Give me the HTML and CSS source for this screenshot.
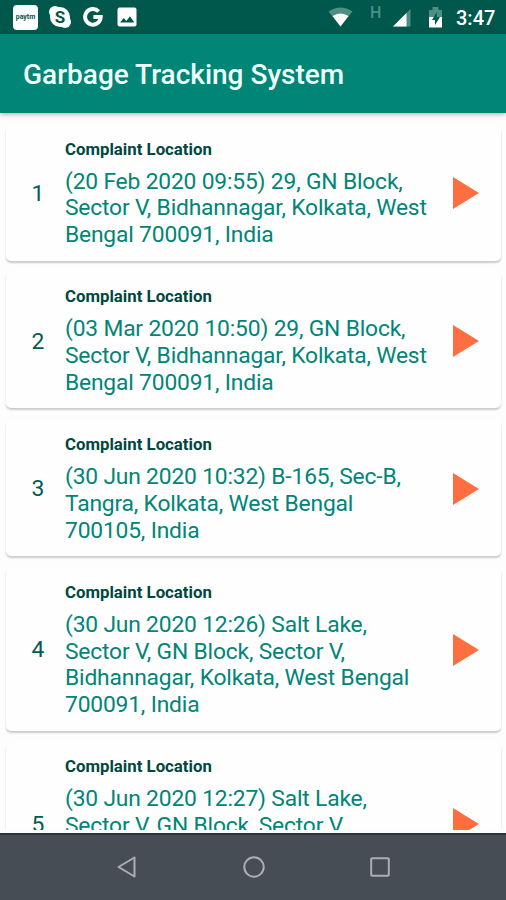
FILE: index.html
```html
<!DOCTYPE html>
<html lang="en">
<head>
<meta charset="utf-8">
<title>Garbage Tracking System</title>
<link rel="stylesheet" href="styles.css">
</head>
<body>
<div class="screen">
  <div class="status">
    <span class="paytm">paytm</span>
    <svg class="skype" width="24" height="24" viewBox="0 0 24 24"><circle cx="12" cy="12" r="10" fill="#fff"/><circle cx="7" cy="7" r="6" fill="#fff"/><circle cx="17" cy="17" r="6" fill="#fff"/><text x="12" y="18" text-anchor="middle" class="skype-letter">S</text></svg>
    <svg class="google" width="20" height="20" viewBox="0 0 20 20"><path d="M15.6 4.5A7.8 7.8 0 1 0 17.7 10H10.4" fill="none" stroke="#fff" stroke-width="4"/></svg>
    <svg class="photo" width="20" height="20" viewBox="0 0 20 20"><rect x=".5" y=".5" width="19" height="19" rx="2" fill="#fff"/><path d="M3 15.5L6.700 11l2.600 3L13 9.200l4.400 6.300z" fill="#00574b"/></svg>
    <svg class="wifi" width="25" height="20" viewBox="0 0 25 20"><path d="M.5 4.500Q12.500-3.500 24.500 4.500L12.500 19.500z" fill="#4d8f83"/><path d="M4.500 9Q12.500 4 20.500 9L12.500 19.500z" fill="#fff"/></svg>
    <span class="network">H</span>
    <svg class="signal" width="18" height="18" viewBox="0 0 18 18"><path d="M0 17.500L17.500 0V17.500z" fill="#4d8f83"/><path d="M0 17.500L13.500 4V17.500z" fill="#fff"/></svg>
    <svg class="battery" width="13" height="21" viewBox="0 0 13 21"><path d="M0 3h3.500V0h6v3H13v7H0z" fill="#4d8f83"/><path d="M0 10h13v10.500H0z" fill="#fff"/><path d="M7.800 5L3 13h3v5l5-8H7.800z" fill="#00574b"/></svg>
    <span class="clock">3:47</span>
  </div>
  <header class="appbar">Garbage Tracking System</header>
  <main class="list">
    <article class="card">
      <span class="num">1</span>
      <div class="info"><h2>Complaint Location</h2><p>(20 Feb 2020 09:55) 29, GN Block,<br>Sector V, Bidhannagar, Kolkata, West<br>Bengal 700091, India</p></div>
      <svg class="play" width="26" height="32" viewBox="0 0 26 32"><path d="M0 0L26 16 0 32z"/></svg>
    </article>
    <article class="card">
      <span class="num">2</span>
      <div class="info"><h2>Complaint Location</h2><p>(03 Mar 2020 10:50) 29, GN Block,<br>Sector V, Bidhannagar, Kolkata, West<br>Bengal 700091, India</p></div>
      <svg class="play" width="26" height="32" viewBox="0 0 26 32"><path d="M0 0L26 16 0 32z"/></svg>
    </article>
    <article class="card">
      <span class="num">3</span>
      <div class="info"><h2>Complaint Location</h2><p>(30 Jun 2020 10:32) B-165, Sec-B,<br>Tangra, Kolkata, West Bengal<br>700105, India</p></div>
      <svg class="play" width="26" height="32" viewBox="0 0 26 32"><path d="M0 0L26 16 0 32z"/></svg>
    </article>
    <article class="card">
      <span class="num">4</span>
      <div class="info"><h2>Complaint Location</h2><p>(30 Jun 2020 12:26) Salt Lake,<br>Sector V, GN Block, Sector V,<br>Bidhannagar, Kolkata, West Bengal<br>700091, India</p></div>
      <svg class="play" width="26" height="32" viewBox="0 0 26 32"><path d="M0 0L26 16 0 32z"/></svg>
    </article>
    <article class="card">
      <span class="num">5</span>
      <div class="info"><h2>Complaint Location</h2><p>(30 Jun 2020 12:27) Salt Lake,<br>Sector V, GN Block, Sector V,<br>Bidhannagar, Kolkata, West Bengal<br>700091, India</p></div>
      <svg class="play" width="26" height="32" viewBox="0 0 26 32"><path d="M0 0L26 16 0 32z"/></svg>
    </article>
  </main>
  <nav class="navbar">
    <svg width="22" height="24" viewBox="0 0 22 24"><path d="M18.500 2.500v19L2.500 12z"/></svg>
    <svg width="24" height="24" viewBox="0 0 24 24"><circle cx="12" cy="12" r="9.700"/></svg>
    <svg width="22" height="24" viewBox="0 0 22 24"><rect x="2.200" y="3.200" width="17.600" height="17.600" rx="1"/></svg>
  </nav>
</div>
</body>
</html>
```
FILE: styles.css
```css
* { box-sizing: border-box; }
body { margin: 0; font-family: Roboto, "Liberation Sans", sans-serif; }
.screen { width: 506px; height: 900px; display: flex; flex-direction: column; overflow: hidden; background: #fdfdfd; }
.status { height: 34px; flex: none; display: flex; align-items: center; padding-left: 13px; background: #00574b; color: #fff; }
.status svg { flex: none; }
.paytm { width: 25px; height: 25px; border-radius: 4px; background: #fff; color: #00574b; font-size: 7px; font-weight: 700; line-height: 25px; text-align: center; }
.skype { margin-left: 10px; }
.skype-letter { font: 700 17px Roboto, sans-serif; fill: #00574b; }
.google { margin-left: 11px; }
.photo { margin-left: 14px; }
.wifi { margin-left: 191px; }
.network { width: 12px; margin: -8px 0 0 17px; color: #4d8f83; font-size: 16px; font-weight: 500; line-height: 16px; }
.signal { margin: 2px 0 0 11px; }
.battery { margin-left: 18px; }
.clock { margin: 2px 0 0 14px; font-size: 20px; font-weight: 500; line-height: 24px; }
.appbar { height: 79px; flex: none; padding: 2px 0 0 23px; background: #008577; color: #eefffb; font-size: 28px; font-weight: 500; line-height: 78px; box-shadow: 0 1px 5px rgba(0, 0, 0, .35); z-index: 1; white-space: nowrap; }
.list { height: 717px; flex: none; padding: 11.600px 5px 0 6px; overflow: hidden; display: flex; flex-direction: column; gap: 11.500px; }
.card { flex: none; display: flex; align-items: center; padding: 13px 22px 11.700px 26px; border-radius: 5px; background: #fefefe; box-shadow: 0 2px 2px rgba(0, 0, 0, .2); }
.num { width: 33px; color: #005c50; font-size: 22.900px; line-height: 27px; letter-spacing: -.2px; text-indent: -.6px; }
.info { flex: 1; white-space: nowrap; }
.info h2 { margin: 0 0 9.100px; color: #00473e; font-size: 16.800px; font-weight: 700; line-height: 22px; }
.info p { margin: 0; color: #008577; font-size: 22.800px; line-height: 26.800px; letter-spacing: -.17px; }
.play { flex: none; fill: #ff6e40; }
.navbar { height: 67px; flex: none; margin-top: 3px; padding: 0 115px 2px 116px; display: flex; justify-content: space-between; align-items: center; border-top: 2px solid #263740; background: #464d55; }
.navbar svg { fill: none; stroke: #a9afb3; stroke-width: 2; stroke-linejoin: round; }
```
